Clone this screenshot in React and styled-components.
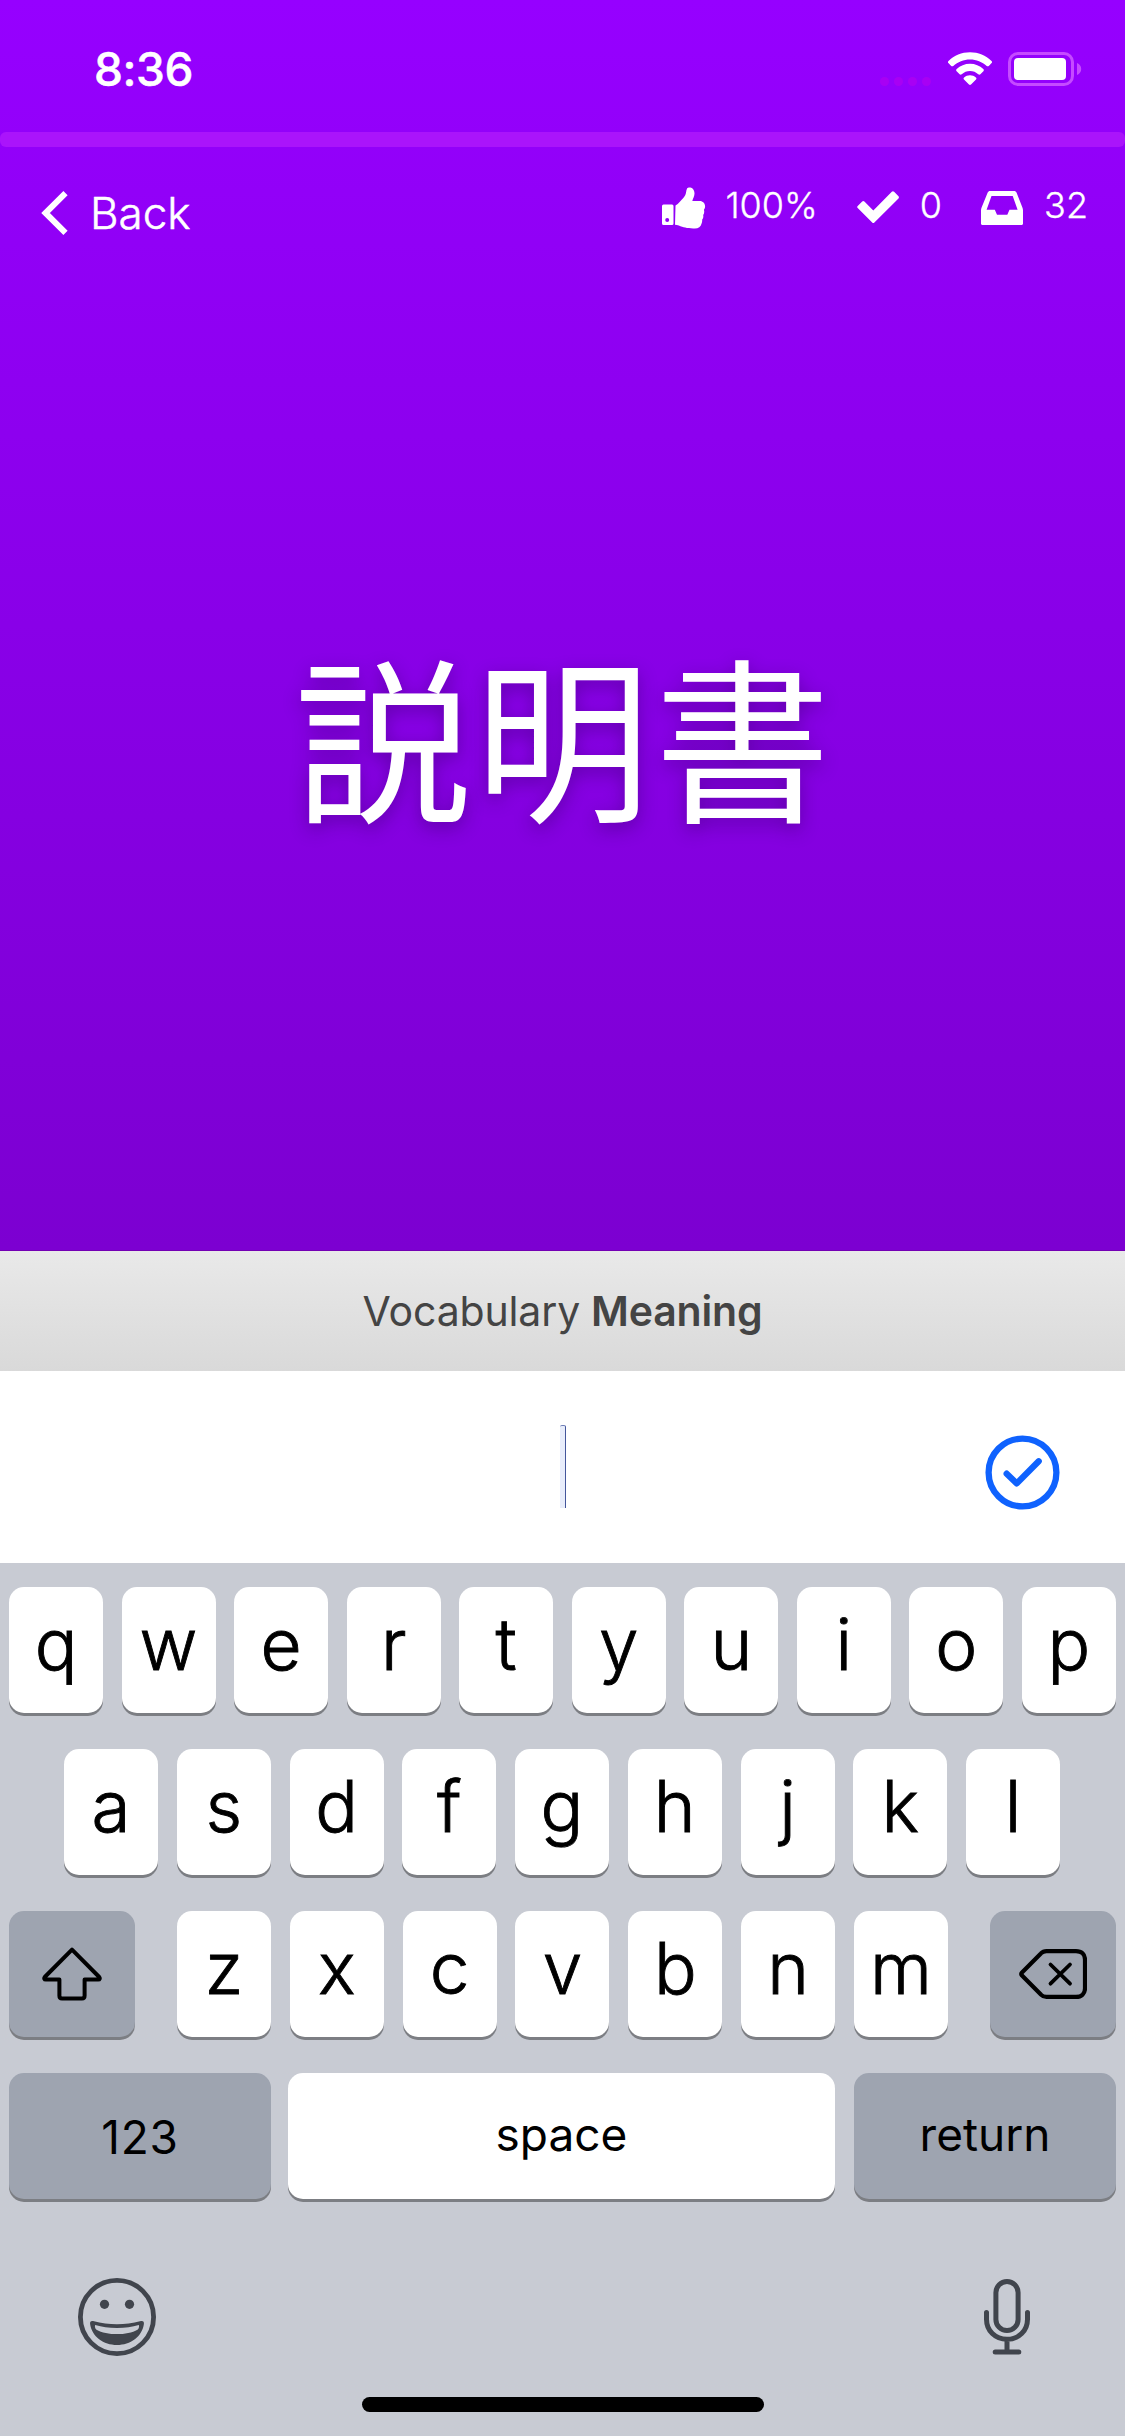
import React from "react";
import styled, { createGlobalStyle } from "styled-components";

const GlobalStyle = createGlobalStyle`
  * { box-sizing: border-box; }
  body {
    margin: 0;
    font-family: Inter, "Liberation Sans", sans-serif;
    background: #c8cbd3;
  }
  svg { display: block; flex: none; }
`;

const Screen = styled.main`
  width: 1125px;
  height: 2436px;
  display: flex;
  flex-direction: column;
  overflow: hidden;
`;

const Prompt = styled.section`
  height: 1251px;
  display: flex;
  flex-direction: column;
  color: #fff;
  background: linear-gradient(#9600ff, #7c00d1);
  border-bottom: 1px solid #7300b4;
`;

const StatusBar = styled.div`
  height: 132px;
  padding: 6px 43px 0 94px;
  display: flex;
  align-items: center;
  justify-content: space-between;
`;

const Time = styled.span`
  font-size: 46px;
  font-weight: 500;
  line-height: 56px;
  letter-spacing: -0.4px;
  -webkit-text-stroke: 0.5px currentColor;
`;

const StatusIcons = styled.div`
  display: flex;
  align-items: center;
`;

const SignalDots = styled.div`
  display: flex;
  gap: 5px;
  margin: 24px 16px 0 0;
`;

const Dot = styled.i`
  width: 9px;
  height: 9px;
  border-radius: 50%;
  background: #a800f4;
`;

const Battery = styled.div`
  margin-left: 15px;
`;

const Progress = styled.div`
  height: 15px;
  border-radius: 6px;
  background: #aa14fb;
`;

const Header = styled.header`
  height: 110px;
  padding: 33px 37px 0 41px;
  display: flex;
  align-items: flex-start;
  justify-content: space-between;
`;

const BackLink = styled.div`
  height: 66px;
  display: flex;
  align-items: center;
  gap: 22px;
  font-size: 44px;
  font-weight: 300;
  -webkit-text-stroke: 0.5px currentColor;
`;

const Stats = styled.div`
  height: 50px;
  display: flex;
  align-items: center;
  gap: 39px;
`;

const Stat = styled.div`
  display: flex;
  align-items: center;
  gap: ${(p) => p.$gap || 21}px;
  font-size: 36px;
  font-weight: 300;
  -webkit-text-stroke: 0.3px currentColor;

  svg { margin-top: 5px; }
`;

const Word = styled.h1`
  margin: 0;
  flex: 1;
  display: flex;
  justify-content: center;
  padding-top: 346px;
  padding-left: 4px;
  font-family: "Noto Sans CJK JP", sans-serif;
  font-size: 176px;
  font-weight: 400;
  letter-spacing: 4px;
  line-height: 260px;
  text-shadow: 0 6px 18px rgba(30, 0, 70, 0.36);
`;

const QuestionType = styled.div`
  height: 120px;
  display: flex;
  align-items: center;
  justify-content: center;
  gap: 11px;
  color: #444;
  font-size: 41px;
  letter-spacing: -0.15px;
  background: linear-gradient(#e9e9e9, #d9d9d9);

  strong { font-weight: 600; }
`;

const AnswerBar = styled.div`
  height: 192px;
  padding: 0 65px 0 0;
  display: grid;
  grid-template-columns: 560px 6px 1fr;
  align-items: center;
  background: #fff;
`;

const Caret = styled.span`
  grid-column: 2;
  height: 83px;
  margin-bottom: 1px;
  border-radius: 2px 2px 0 0;
  background: #e8edfb;
  border-right: 1px solid #44569b;
  border-top: 1px solid #6f7fb8;
`;

const Submit = styled.div`
  justify-self: end;
  margin-top: 11px;
`;

const Keyboard = styled.div`
  flex: 1;
  padding-top: 24px;
  display: flex;
  flex-direction: column;
  background: #c8cbd3;
`;

const KeyRow = styled.div`
  display: flex;
  justify-content: space-between;
  padding: ${(p) => (p.$inset ? "0 65px 0 64px" : "0 9px")};
  margin-bottom: 36px;
`;

const Letters = styled.div`
  display: flex;
  justify-content: space-between;
  width: 771px;
`;

const Key = styled.div`
  width: ${(p) => p.$width || 94}px;
  height: 126px;
  padding-bottom: 12px;
  display: flex;
  align-items: center;
  justify-content: center;
  border-radius: 15px;
  background: ${(p) => (p.$dark ? "#9ea4b0" : "#fff")};
  box-shadow: 0 3px 0 #7c7e83;
  color: #000;
  font-size: 71px;
  font-weight: 300;
  -webkit-text-stroke: 0.9px #000;
`;

const WordKey = styled(Key)`
  padding: ${(p) => (p.$low ? "2px 0 0" : "0 0 4px")};
  margin-right: ${(p) => p.$after || 0}px;
  font-size: 46px;
  font-weight: 400;
  letter-spacing: ${(p) => p.$tracking || 0}px;
  -webkit-text-stroke: 0;
`;

const IconKey = styled(Key)`
  padding: 0;
`;

const Accessory = styled.div`
  height: 84px;
  margin-top: 40px;
  padding: 0 95px 0 77px;
  display: flex;
  align-items: center;
  justify-content: space-between;
`;

const HomeIndicator = styled.div`
  width: 402px;
  height: 15px;
  margin: 38px auto 0;
  border-radius: 8px;
  background: #000;
`;

const WifiIcon = () => (
  <svg width="46" height="34" viewBox="0 0 46 34" fill="#fff">
    <path d="M23 .3c8.300 0 15.900 3.300 21.500 8.600.7.700.7 1.500.1 2.200l-2.800 2.800c-.6.600-1.500.600-2.100 0C35.200 9.800 29.400 7.400 23 7.400S10.800 9.800 6.300 13.900c-.6.600-1.500.600-2.100 0l-2.800-2.800c-.6-.7-.6-1.500.1-2.200C7.100 3.600 14.700.3 23 .3z" />
    <path d="M23 11.800c5.100 0 9.800 2 13.300 5.200.7.700.7 1.500.1 2.200l-3 3c-.6.600-1.400.600-2.100.1C29 20.200 26.200 19 23 19s-6 1.200-8.300 3.300c-.7.500-1.500.500-2.100-.1l-3-3c-.6-.7-.6-1.500.1-2.200 3.500-3.200 8.200-5.200 13.300-5.200z" />
    <path d="M23 23.200c2.200 0 4.300.8 5.900 2.200.7.600.7 1.400.1 2l-5 5.100c-.6.600-1.400.6-2 0l-5-5.100c-.6-.6-.6-1.400.1-2 1.600-1.400 3.700-2.200 5.900-2.200z" />
  </svg>
);

const BatteryIcon = () => (
  <svg width="74" height="34" viewBox="0 0 74 34">
    <rect x="1.500" y="1.500" width="63" height="31" rx="8.500" fill="none" stroke="#c54bff" strokeWidth="3" />
    <rect x="6" y="6" width="52" height="22" rx="4" fill="#fff" />
    <path d="M69 11c2.700 1.100 4.200 3.400 4.200 6s-1.500 4.900-4.200 6z" fill="#c54bff" />
  </svg>
);

const ChevronIcon = () => (
  <svg width="27" height="44" viewBox="0 0 27 44" fill="none" stroke="#fff" strokeWidth="6">
    <path d="M24.500 2.200 4.500 22l20 19.800" />
  </svg>
);

const ThumbIcon = () => (
  <svg width="44" height="42" viewBox="0 0 44 42">
    <path d="M1.500 17.500H10a1.500 1.500 0 0 1 1.500 1.500v17.500A1.500 1.500 0 0 1 10 38H1.500A1.500 1.500 0 0 1 0 36.500V19a1.500 1.500 0 0 1 1.500-1.500z" fill="#fff" />
    <path d="M13.500 18.500c3.200-2 5.200-5 7.800-7.600C25 7.200 23.500 4.500 25.200 1.300 26.500-.5 32.500-.1 32.500 6.500c0 3-1.700 5-2.200 7.600h7.500c3 0 5.300 2.500 5.300 5.100 0 1.500-.5 2.700-1.200 3.600.6 1.700.4 3.800-.7 5.200.4 1.800-.1 3.500-1.100 4.800.3 1.500-.1 2.800-.6 3.900-.7 3.200-3 4.800-6.700 4.800-7.500.2-11-1-16-2.900-1.300-.4-2.600-.6-3.800-.8z" fill="#fff" />
    <circle cx="5.200" cy="33" r="2" fill="#9000f4" />
  </svg>
);

const CheckIcon = () => (
  <svg width="42" height="33" viewBox="0 0 42 33" fill="#fff">
    <path d="M.7 14.900 5.200 10.600c.7-.7 1.500-.7 2.200 0l8.900 8.800L34.800.8c.7-.7 1.600-.7 2.300 0L41.500 5.200c.6.700.6 1.500 0 2.200L17.400 31.500c-.7.700-1.500.7-2.200 0L.7 17.100c-.7-.7-.7-1.500 0-2.200z" />
  </svg>
);

const InboxIcon = () => (
  <svg width="42" height="34" viewBox="0 0 42 34">
    <path fill="#fff" fillRule="evenodd" d="M9 0h24.200c1 0 1.900.6 2.300 1.500l5.900 15.100c.4.900.6 1.900.6 2.900v13c0 .9-.6 1.500-1.500 1.500h-39C.600 34 0 33.400 0 32.500v-13c0-1 .2-2 .6-2.900L6.700 1.500C7.100.6 8 0 9 0zm1.500 5L5.600 18.800h8.200l2.200 5h10.300l2.200-5h8.100L31.700 5z" />
  </svg>
);

const SubmitIcon = () => (
  <svg width="75" height="75" viewBox="0 0 75 75" fill="none" stroke="#0f62fe" strokeWidth="6.300">
    <circle cx="37.500" cy="37.500" r="33.900" />
    <path d="M21.700 38.700 31.800 48.400 53.700 26.300" strokeLinecap="round" strokeLinejoin="round" />
  </svg>
);

const ShiftIcon = () => (
  <svg width="60" height="54" viewBox="0 0 60 54" fill="none" stroke="#000" strokeWidth="4" strokeLinejoin="round">
    <path d="M30 2.600 57.200 30c1 1.200.6 2.600-1 2.600H42.600v16.200c0 1.800-.8 2.700-2.600 2.700H20c-1.800 0-2.600-.9-2.600-2.700V32.600H3.800c-1.600 0-2-1.400-1-2.600z" />
  </svg>
);

const DeleteIcon = () => (
  <svg width="68" height="50" viewBox="0 0 68 50" fill="none" stroke="#000" strokeWidth="4.200" strokeLinecap="round" strokeLinejoin="round">
    <path d="M27.500 2.100H57c5.500 0 9 3.300 9 8.500v28.800c0 5.200-3.500 8.500-9 8.500H27.500c-2.300 0-4-.6-5.600-2.300L3 26.600c-1-1.100-1-2.100 0-3.200L21.900 4.400c1.600-1.700 3.300-2.300 5.600-2.300z" />
    <path d="M31.500 15.500 51 34.700M51 15.500 31.500 34.700" strokeWidth="3.800" />
  </svg>
);

const EmojiIcon = () => (
  <svg width="80" height="80" viewBox="0 0 80 80" fill="#41454d">
    <circle cx="40" cy="40" r="36.600" fill="none" stroke="#41454d" strokeWidth="4.800" />
    <circle cx="27.500" cy="27.300" r="4.600" />
    <circle cx="52.500" cy="27.300" r="4.600" />
    <path fillRule="evenodd" d="M16 44c9 2.300 15.800 3.200 24 3.200S55 46.300 64 44c2.200-.4 3.200.8 2.900 3C65.200 59.500 53.500 68 40 68S14.800 59.500 13.100 47c-.3-2.200.7-3.400 2.900-3zM18.200 48c-.7 1.200-.2 3.500 1.300 4.700 5 3 13 4.400 20.500 4.400s15.500-1.400 20.500-4.400c1.500-1.200 2-3.500 1.300-4.700C55 50 48.500 51 40 51s-15-1-21.800-3z" />
  </svg>
);

const MicIcon = () => (
  <svg width="46" height="76" viewBox="0 0 46 76" fill="none" stroke="#41454d" strokeWidth="5" strokeLinecap="round">
    <rect x="11.900" y="2.500" width="22.200" height="49" rx="11.100" />
    <path d="M2.500 33.500v6.700c0 11.500 8.700 20.100 20.500 20.100s20.500-8.600 20.500-20.100v-6.700M23 61v11M11.200 73h23.600" />
  </svg>
);

const renderLetters = (letters) => letters.split("").map((l) => <Key key={l}>{l}</Key>);

export default function App() {
  return (
    <Screen>
      <GlobalStyle />
      <Prompt>
        <StatusBar>
          <Time>8:36</Time>
          <StatusIcons>
            <SignalDots><Dot /><Dot /><Dot /><Dot /></SignalDots>
            <WifiIcon />
            <Battery><BatteryIcon /></Battery>
          </StatusIcons>
        </StatusBar>
        <Progress />
        <Header>
          <BackLink><ChevronIcon />Back</BackLink>
          <Stats>
            <Stat $gap={19}><ThumbIcon />100%</Stat>
            <Stat><CheckIcon />0</Stat>
            <Stat><InboxIcon />32</Stat>
          </Stats>
        </Header>
        <Word>説明書</Word>
      </Prompt>
      <QuestionType><span>Vocabulary</span><strong>Meaning</strong></QuestionType>
      <AnswerBar>
        <Caret />
        <Submit><SubmitIcon /></Submit>
      </AnswerBar>
      <Keyboard>
        <KeyRow>{renderLetters("qwertyuiop")}</KeyRow>
        <KeyRow $inset>{renderLetters("asdfghjkl")}</KeyRow>
        <KeyRow>
          <IconKey $dark $width={126}><ShiftIcon /></IconKey>
          <Letters>{renderLetters("zxcvbnm")}</Letters>
          <IconKey $dark $width={126}><DeleteIcon /></IconKey>
        </KeyRow>
        <KeyRow>
          <WordKey $dark $low $width={262} $tracking={0.8}>123</WordKey>
          <WordKey $width={547} $after={2}>space</WordKey>
          <WordKey $dark $width={262}>return</WordKey>
        </KeyRow>
        <Accessory><EmojiIcon /><MicIcon /></Accessory>
        <HomeIndicator />
      </Keyboard>
    </Screen>
  );
}
